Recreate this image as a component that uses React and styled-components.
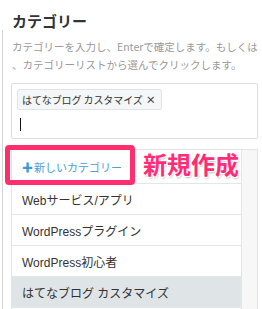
import React from "react";
import styled, { createGlobalStyle } from "styled-components";

const GlobalStyle = createGlobalStyle`
  html, body {
    margin: 0;
    padding: 0;
    background: #fff;
  }
  body {
    font-family: "Helvetica Neue", "Liberation Sans", "Noto Sans CJK JP", sans-serif;
  }
`;

const categories = [
  "Webサービス/アプリ",
  "WordPressプラグイン",
  "WordPress初心者",
  "はてなブログ カスタマイズ",
];

const App = () => {
  return (
    <>
      <GlobalStyle />
      <Panel>
        <Title>カテゴリー</Title>
        <Hint>
          カテゴリーを入力し、Enterで確定します。もしくは
          <br />
          、カテゴリーリストから選んでクリックします。
        </Hint>

        <InputBox>
          <Tag>
            はてなブログ カスタマイズ <Remove>×</Remove>
          </Tag>
          <Caret />
        </InputBox>

        <ListWrap>
          <List>
            <NewRow>
              <Plus>✚</Plus>新しいカテゴリー
            </NewRow>
            {categories.map((c, i) => (
              <Row key={c} $active={i === categories.length - 1}>
                {c}
              </Row>
            ))}
          </List>
          <Scrollbar />
          <Highlight />
          <Note>新規作成</Note>
        </ListWrap>
      </Panel>
    </>
  );
};

const Panel = styled.div`
  position: relative;
  width: 262px;
  height: 309px;
  overflow: hidden;
  box-sizing: border-box;
  padding: 11px 4px 0 11px;
  &::before {
    content: "";
    position: absolute;
    left: 2px;
    top: 30px;
    bottom: 0;
    width: 1px;
    background: #d4d4d4;
  }
`;

const Title = styled.h2`
  margin: 0 0 0 1px;
  font-size: 15px;
  line-height: 20px;
  font-weight: 700;
  color: #333;
  font-family: "Noto Sans CJK JP", sans-serif;
`;

const Hint = styled.p`
  margin: 7px 0 0 1px;
  font-size: 10.5px;
  line-height: 18px;
  color: #999;
  white-space: nowrap;
  font-family: "Noto Sans CJK JP", sans-serif;
`;

const InputBox = styled.div`
  margin-top: 9px;
  height: 56px;
  box-sizing: border-box;
  border: 1px solid #dcdfe2;
  border-radius: 2px;
  padding: 5px 5px;
  display: flex;
  flex-direction: column;
  align-items: flex-start;
`;

const Tag = styled.span`
  display: inline-flex;
  align-items: center;
  height: 21px;
  box-sizing: border-box;
  padding: 0 5px 0 4px;
  background: #f4f6f8;
  border: 1px solid #dfe4e8;
  border-radius: 2px;
  font-size: 10px;
  letter-spacing: -0.1px;
  color: #333;
  font-family: "Noto Sans CJK JP", sans-serif;
  white-space: nowrap;
`;

const Remove = styled.span`
  margin-left: 3px;
  font-size: 10px;
  font-weight: 700;
  color: #444;
`;

const Caret = styled.span`
  display: block;
  width: 1px;
  height: 13px;
  margin: 8px 0 0 3px;
  background: #111;
`;

const ListWrap = styled.div`
  position: relative;
  margin-top: 10px;
  display: flex;
  border-top: 1px solid #e3e3e3;
  border-left: 1px solid #e3e3e3;
  height: 200px;
`;

const List = styled.div`
  flex: 1;
  display: flex;
  flex-direction: column;
`;

const NewRow = styled.div`
  height: 33px;
  flex-shrink: 0;
  display: flex;
  align-items: center;
  padding-left: 10px;
  font-size: 11px;
  color: #4aa0d5;
  font-family: "Noto Sans CJK JP", sans-serif;
  border-bottom: 1px solid #e3e6e8;
`;

const Plus = styled.span`
  font-size: 11px;
  margin-right: 1px;
  color: #3a9ad6;
`;

const Row = styled.div`
  height: 30px;
  flex-shrink: 0;
  display: flex;
  align-items: center;
  padding-left: 10px;
  font-size: 12px;
  color: #333;
  font-family: "Liberation Sans", "Noto Sans CJK JP", sans-serif;
  border-bottom: 1px solid #e3e6e8;
  background: ${(p) => (p.$active ? "#dfe4e7" : "#fff")};
`;

const Scrollbar = styled.div`
  width: 15px;
  background: #f7f7f7;
  border-left: 1px solid #e6e6e6;
  border-right: 1px solid #e3e3e3;
`;

const Highlight = styled.div`
  position: absolute;
  left: -7px;
  top: -5px;
  width: 130px;
  height: 40px;
  box-sizing: border-box;
  border: 5px solid #ff2f6e;
  border-radius: 4px;
  pointer-events: none;
`;

const Note = styled.div`
  position: absolute;
  left: 131px;
  top: -3px;
  font-size: 24px;
  line-height: 34px;
  font-weight: 700;
  color: #ff2d76;
  font-family: "Noto Sans CJK JP", sans-serif;
  text-shadow: 1px 1px 0 #fff, -1px -1px 0 #fff, 1px -1px 0 #fff, -1px 1px 0 #fff,
    1px 2px 2px rgba(0, 0, 0, 0.25);
  white-space: nowrap;
`;

export default App;
